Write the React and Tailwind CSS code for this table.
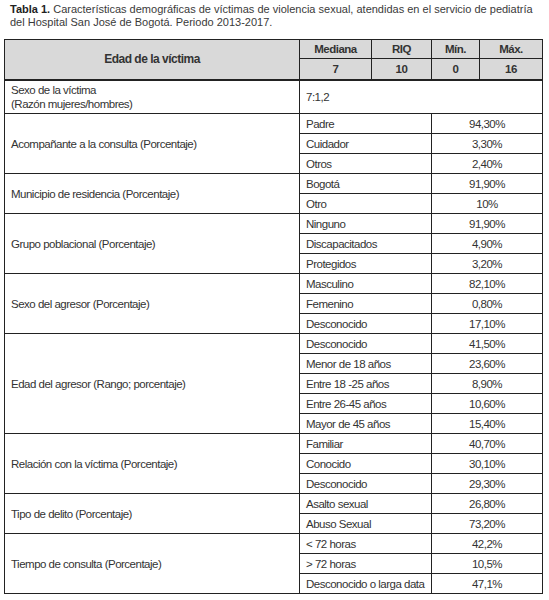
import React from "react";

const groups = [
  { label: "Acompañante a la consulta (Porcentaje)", rows: [["Padre", "94,30%"], ["Cuidador", "3,30%"], ["Otros", "2,40%"]] },
  { label: "Municipio de residencia (Porcentaje)", rows: [["Bogotá", "91,90%"], ["Otro", "10%"]] },
  { label: "Grupo poblacional (Porcentaje)", rows: [["Ninguno", "91,90%"], ["Discapacitados", "4,90%"], ["Protegidos", "3,20%"]] },
  { label: "Sexo del agresor (Porcentaje)", rows: [["Masculino", "82,10%"], ["Femenino", "0,80%"], ["Desconocido", "17,10%"]] },
  { label: "Edad del agresor (Rango; porcentaje)", rows: [["Desconocido", "41,50%"], ["Menor de 18 años", "23,60%"], ["Entre 18 -25 años", "8,90%"], ["Entre 26-45 años", "10,60%"], ["Mayor de 45 años", "15,40%"]] },
  { label: "Relación con la víctima (Porcentaje)", rows: [["Familiar", "40,70%"], ["Conocido", "30,10%"], ["Desconocido", "29,30%"]] },
  { label: "Tipo de delito (Porcentaje)", rows: [["Asalto sexual", "26,80%"], ["Abuso Sexual", "73,20%"]] },
  { label: "Tiempo de consulta (Porcentaje)", rows: [["< 72 horas", "42,2%"], ["> 72 horas", "10,5%"], ["Desconocido o larga data", "47,1%"]] },
];

const font = { fontFamily: '"Liberation Sans", Arial, sans-serif' };

export default function App() {
  return (
    <div className="w-[549px] h-[600px] bg-white text-[#333]" style={font}>
      <p className="pl-[10px] pr-[4px] pt-[3px] text-[11px] leading-[13px] h-[39px] text-[#3a3a3a]">
        <span className="font-bold text-[#222]">Tabla 1.</span> Características demográficas de víctimas de violencia sexual, atendidas en el servicio de pediatría del Hospital San José de Bogotá. Periodo 2013-2017.
      </p>
      <table className="ml-[4px] border-collapse table-fixed w-[538px] text-[11.5px] leading-[14px] tracking-[-0.5px]">
        <colgroup>
          <col className="w-[295px]" />
          <col className="w-[72px]" />
          <col className="w-[60px]" />
          <col className="w-[48px]" />
          <col className="w-[63px]" />
        </colgroup>
        <thead>
          <tr className="h-[19px] bg-[#d9d9d9] text-[#333]">
            <th rowSpan={2} className="border border-[#222] border-b-2 text-center font-bold text-[12px]">Edad de la víctima</th>
            <th className="border border-[#222] text-center font-bold">Mediana</th>
            <th className="border border-[#222] text-center font-bold">RIQ</th>
            <th className="border border-[#222] text-center font-bold">Mín.</th>
            <th className="border border-[#222] text-center font-bold">Máx.</th>
          </tr>
          <tr className="h-[21px] bg-[#d9d9d9]">
            <th className="border border-[#222] border-b-2 text-center font-bold">7</th>
            <th className="border border-[#222] border-b-2 text-center font-bold">10</th>
            <th className="border border-[#222] border-b-2 text-center font-bold">0</th>
            <th className="border border-[#222] border-b-2 text-center font-bold">16</th>
          </tr>
        </thead>
        <tbody>
          <tr className="h-[34px]">
            <td className="border border-[#222] pl-[6px] align-middle">Sexo de la víctima<br />(Razón mujeres/hombres)</td>
            <td colSpan={4} className="border border-[#222] pl-[6px]">7:1,2</td>
          </tr>
          {groups.map((g) =>
            g.rows.map((r, i) => (
              <tr key={g.label + i} className="h-[20px]">
                {i === 0 && (
                  <td rowSpan={g.rows.length} className="border border-[#222] pl-[6px] align-middle">
                    {g.label}
                  </td>
                )}
                <td colSpan={2} className="border border-[#222] pl-[6px] whitespace-nowrap">{r[0]}</td>
                <td colSpan={2} className="border border-[#222] text-center">{r[1]}</td>
              </tr>
            ))
          )}
        </tbody>
      </table>
    </div>
  );
}
